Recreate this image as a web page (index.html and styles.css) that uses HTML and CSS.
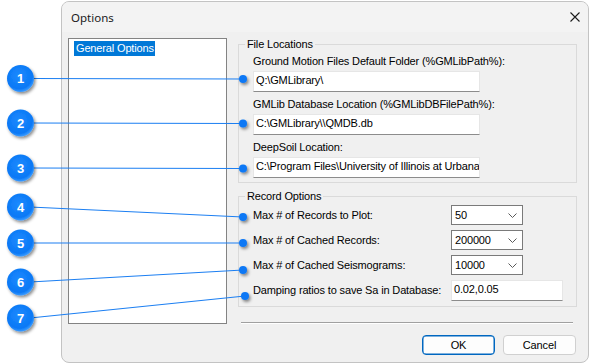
FILE: index.html
```html
<!DOCTYPE html>
<html>
<head>
<meta charset="utf-8">
<link rel="stylesheet" href="styles.css">
</head>
<body>
<div class="dialog">
  <div class="titlebar">
    <span class="title">Options</span>
    <svg class="close" width="10" height="10" viewBox="0 0 10 10"><path d="M0.5 0.5 L9.5 9.5 M9.5 0.5 L0.5 9.5" stroke="#1b1b1b" stroke-width="1.1" fill="none"/></svg>
  </div>
  <div class="body">
    <div class="list"><div class="item selected">General Options</div></div>
    <div class="main">
      <fieldset class="group">
        <legend>File Locations</legend>
        <div class="files">
          <div class="field">
            <div class="label">Ground Motion Files Default Folder (%GMLibPath%):</div>
            <div class="textbox wide">Q:\GMLibrary\</div>
          </div>
          <div class="field">
            <div class="label">GMLib Database Location (%GMLibDBFilePath%):</div>
            <div class="textbox wide">C:\GMLibrary\\QMDB.db</div>
          </div>
          <div class="field">
            <div class="label">DeepSoil Location:</div>
            <div class="textbox wide">C:\Program Files\University of Illinois at Urbana</div>
          </div>
        </div>
      </fieldset>
      <fieldset class="group second">
        <legend>Record Options</legend>
        <div class="records">
          <div class="label">Max # of Records to Plot:</div>
          <div class="combo"><span>50</span><svg width="9" height="5" viewBox="0 0 9 5"><polyline points="0.5,0.5 4.5,4.5 8.5,0.5" stroke="#5a5a5a" fill="none"/></svg></div>
          <div class="label">Max # of Cached Records:</div>
          <div class="combo"><span>200000</span><svg width="9" height="5" viewBox="0 0 9 5"><polyline points="0.5,0.5 4.5,4.5 8.5,0.5" stroke="#5a5a5a" fill="none"/></svg></div>
          <div class="label">Max # of Cached Seismograms:</div>
          <div class="combo"><span>10000</span><svg width="9" height="5" viewBox="0 0 9 5"><polyline points="0.5,0.5 4.5,4.5 8.5,0.5" stroke="#5a5a5a" fill="none"/></svg></div>
          <div class="label">Damping ratios to save Sa in Database:</div>
          <div class="textbox short">0.02,0.05</div>
        </div>
      </fieldset>
      <div class="separator"></div>
    </div>
  </div>
  <div class="footer">
    <button class="btn default">OK</button>
    <button class="btn">Cancel</button>
  </div>
</div>

<svg class="callouts" width="590" height="364" viewBox="0 0 590 364">
  <defs>
    <radialGradient id="bub" cx="45%" cy="40%" r="60%">
      <stop offset="0" stop-color="#1d8bff"/>
      <stop offset="0.8" stop-color="#0a78f5"/>
      <stop offset="1" stop-color="#3b9bff"/>
    </radialGradient>
    <filter id="sh" x="-40%" y="-40%" width="200%" height="200%">
      <feDropShadow dx="1.5" dy="2" stdDeviation="1.6" flood-color="#000" flood-opacity="0.45"/>
    </filter>
  </defs>
  <g stroke="#1c7ff2" stroke-width="1.2" fill="none">
    <line x1="30" y1="78.5" x2="243" y2="79"/>
    <line x1="30" y1="123" x2="243" y2="123.5"/>
    <line x1="30" y1="168" x2="243" y2="168.5"/>
    <line x1="30" y1="207" x2="243" y2="217"/>
    <line x1="30" y1="243" x2="243" y2="243"/>
    <line x1="30" y1="282" x2="243" y2="270"/>
    <line x1="30" y1="318" x2="245" y2="296"/>
  </g>
  <g fill="#0a78f5" filter="url(#sh)">
    <circle cx="243" cy="79" r="4"/>
    <circle cx="243" cy="123.5" r="4"/>
    <circle cx="243" cy="168.5" r="4"/>
    <circle cx="243" cy="217" r="4"/>
    <circle cx="243" cy="243" r="4"/>
    <circle cx="243" cy="270" r="4"/>
    <circle cx="245" cy="296" r="4"/>
  </g>
  <g filter="url(#sh)">
    <circle cx="20.5" cy="78.5" r="13.5" fill="url(#bub)"/>
    <circle cx="20.5" cy="123" r="13.5" fill="url(#bub)"/>
    <circle cx="20.5" cy="168" r="13.5" fill="url(#bub)"/>
    <circle cx="20.5" cy="207" r="13.5" fill="url(#bub)"/>
    <circle cx="20.5" cy="243" r="13.5" fill="url(#bub)"/>
    <circle cx="20.5" cy="282" r="13.5" fill="url(#bub)"/>
    <circle cx="20.5" cy="318" r="13.5" fill="url(#bub)"/>
  </g>
  <g class="nums" fill="#fff" text-anchor="middle">
    <text x="20.5" y="83">1</text>
    <text x="20.5" y="127.5">2</text>
    <text x="20.5" y="172.5">3</text>
    <text x="20.5" y="211.5">4</text>
    <text x="20.5" y="247.5">5</text>
    <text x="20.5" y="286.5">6</text>
    <text x="20.5" y="322.5">7</text>
  </g>
</svg>
</body>
</html>
```

FILE: styles.css
```css
html, body {
  margin: 0;
  padding: 0;
  background: #ffffff;
}

body {
  position: relative;
  width: 590px;
  height: 364px;
  overflow: hidden;
  font-family: "Liberation Sans", Arial, sans-serif;
  font-size: 11px;
  letter-spacing: -0.15px;
  color: #000;
}

.dialog {
  box-sizing: border-box;
  margin: 1px 0 0 61px;
  width: 528px;
  height: 362px;
  border: 1px solid #c3c3c3;
  border-radius: 8px;
  background: #f0f0f0;
  overflow: hidden;
  display: flex;
  flex-direction: column;
}

.titlebar {
  height: 30px;
  flex: none;
  background: #f3f3f3;
  display: flex;
  align-items: center;
  justify-content: space-between;
  padding: 0 8px 0 9px;
}

.title {
  font-family: "Noto Sans", "Open Sans", sans-serif;
  font-size: 11.5px;
  letter-spacing: 0;
  color: #1a1a1a;
}

.close {
  display: block;
}

.body {
  display: flex;
  padding: 6px 10px 0 6px;
}

.list {
  box-sizing: border-box;
  width: 159px;
  height: 286px;
  border: 1px solid #838383;
  background: #fff;
  padding: 2px 0 0 5px;
}

.item {
  display: inline-block;
  height: 15px;
  line-height: 15px;
  padding: 0 1px 0 2px;
}

.selected {
  background: #0078d7;
  color: #fff;
}

.main {
  margin-left: 11px;
  width: 339px;
}

.group {
  margin: 0;
  padding: 0;
  min-width: 0;
  border: 1px solid #dadada;
}

.group legend {
  margin-left: 6px;
  padding: 0 2px;
  line-height: 13px;
}

.second {
  margin-top: 7px;
}

.files {
  padding: 4px 0 4px 14px;
}

.field + .field {
  margin-top: 6px;
}

.label {
  line-height: 13px;
  white-space: nowrap;
}

.textbox {
  box-sizing: border-box;
  height: 21px;
  background: #fff;
  border: 1px solid #e6e6e6;
  border-bottom-color: #8c8c8c;
  padding: 0 2px;
  line-height: 17px;
  white-space: nowrap;
  overflow: hidden;
}

.field .textbox {
  margin-top: 3px;
}

.wide {
  width: 227px;
}

.records {
  padding: 2px 0 5px 14px;
  display: grid;
  grid-template-columns: 198px auto;
  row-gap: 5px;
  align-items: center;
  justify-items: start;
}

.combo {
  box-sizing: border-box;
  width: 72px;
  height: 20px;
  background: #fff;
  border: 1px solid #7a7a7a;
  display: flex;
  align-items: center;
  justify-content: space-between;
  padding: 0 5px 0 3px;
}

.combo span {
  line-height: 16px;
}

.combo svg {
  display: block;
}

.short {
  width: 112px;
}

.separator {
  margin: 15px 4px 0 3px;
  border-top: 1px solid #a0a0a0;
  border-bottom: 1px solid #ffffff;
}

.footer {
  margin-top: 11px;
  display: flex;
  justify-content: flex-end;
  gap: 8px;
  padding-right: 12px;
}

.btn {
  box-sizing: border-box;
  width: 73px;
  height: 20px;
  margin: 0;
  padding: 0;
  border: 1px solid #d0d0d0;
  border-radius: 4px;
  background: #fdfdfd;
  font-family: "Liberation Sans", Arial, sans-serif;
  font-size: 11px;
  letter-spacing: -0.15px;
  color: #000;
}

.default {
  border-color: #0067c0;
  box-shadow: inset 0 0 0 0.5px #0067c0;
}

.callouts {
  position: absolute;
  left: 0;
  top: 0;
  pointer-events: none;
}

.nums {
  font-family: "Liberation Sans", Arial, sans-serif;
  font-weight: bold;
  font-size: 13px;
  letter-spacing: 0;
}
```
